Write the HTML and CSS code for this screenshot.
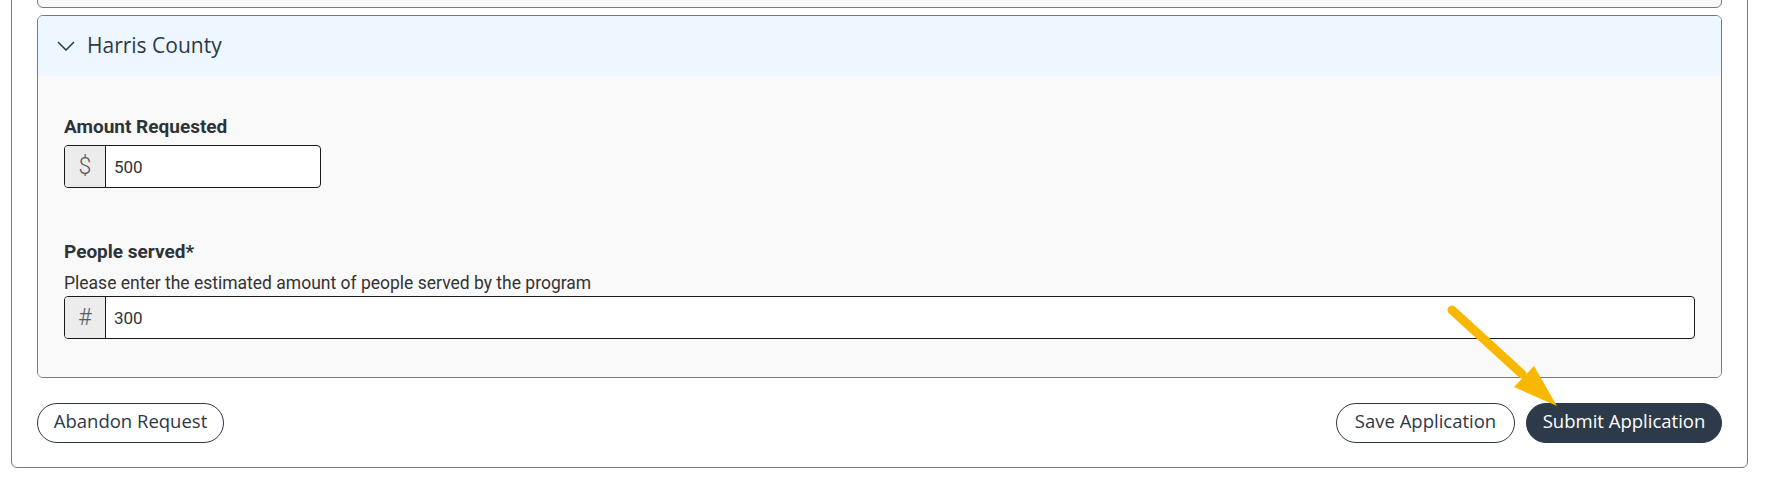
FILE: index.html
```html
<!DOCTYPE html>
<html lang="en">
<head>
<meta charset="utf-8">
<title>Application</title>
<link rel="stylesheet" href="styles.css">
</head>
<body>
<div class="page">
  <div class="card">
    <div class="acc-item acc-prev"></div>
    <div class="acc-item acc-open">
      <div class="acc-header">
        <svg class="chev" width="18" height="10" viewBox="0 0 18 10"><path d="M1 1 L9 9 L17 1" fill="none" stroke="#2d3748" stroke-width="1.5"/></svg>
        <span class="acc-title">Harris County</span>
      </div>
      <div class="acc-body">
        <div class="field field-amount">
          <label class="field-label">Amount Requested</label>
          <div class="input-group input-short">
            <span class="addon">$</span>
            <span class="input-value">500</span>
          </div>
        </div>
        <div class="field field-people">
          <label class="field-label">People served*</label>
          <div class="field-help">Please enter the estimated amount of people served by the program</div>
          <div class="input-group">
            <span class="addon">#</span>
            <span class="input-value">300</span>
          </div>
        </div>
      </div>
    </div>
    <div class="actions">
      <button class="btn btn-outline btn-abandon">Abandon Request</button>
      <div class="actions-right">
        <button class="btn btn-outline btn-save">Save Application</button>
        <button class="btn btn-dark btn-submit">Submit Application</button>
      </div>
    </div>
  </div>
  <svg class="arrow" width="130" height="115" viewBox="0 0 130 115">
    <line x1="12" y1="10" x2="82" y2="74" stroke="#f9b800" stroke-width="9" stroke-linecap="round"/>
    <polygon points="74,87 94,66 117,106" fill="#f9b800"/>
  </svg>
</div>
</body>
</html>
```
FILE: styles.css
```css
html, body {
  margin: 0;
  padding: 0;
  background: #ffffff;
  height: 483px;
  overflow: hidden;
}
.page {
  position: relative;
  width: 1765px;
  height: 483px;
  overflow: hidden;
  font-family: Roboto, "Liberation Sans", sans-serif;
  color: #2d3338;
}
.card {
  margin: -50px 17px 0 11px;
  border: 1px solid #7a7a7a;
  border-radius: 6px;
  padding: 0 25px 24px 25px;
  background: #ffffff;
}
.acc-item {
  border: 1px solid #7a7a7a;
  border-radius: 6px;
  overflow: hidden;
}
.acc-prev {
  height: 55px;
  background: #f9f9f9;
}
.acc-open {
  margin-top: 7px;
}
.acc-header {
  height: 60px;
  background: #eef6ff;
  display: flex;
  align-items: center;
  padding-left: 19px;
  gap: 12px;
}
.chev {
  display: block;
  flex: none;
}
.acc-title {
  font-family: "Open Sans", sans-serif;
  font-size: 21px;
  line-height: 24px;
  color: #2d3748;
  margin-top: -2px;
}
.acc-body {
  background: #f9f9f9;
  padding: 40px 26px 38px 26px;
}
.field-label {
  display: block;
  font-size: 19px;
  line-height: 21px;
  font-weight: 700;
  color: #2d3338;
}
.field-amount .field-label {
  margin-bottom: 8px;
}
.field-people {
  margin-top: 53px;
}
.field-help {
  font-size: 17.5px;
  line-height: 20px;
  margin-top: 11px;
  margin-bottom: 3px;
  color: #333;
}
.input-group {
  display: flex;
  height: 43px;
  box-sizing: border-box;
  border: 1px solid #1a1a1a;
  border-radius: 4px;
  background: #fff;
  overflow: hidden;
}
.input-short {
  width: 257px;
}
.addon {
  width: 40px;
  flex: none;
  background: #ececec;
  border-right: 1px solid #1a1a1a;
  display: flex;
  align-items: center;
  justify-content: center;
  font-size: 23px;
  font-weight: 300;
  color: #555b63;
}
.input-value {
  display: flex;
  align-items: center;
  padding-left: 8px;
  font-size: 17px;
  color: #333;
}
.actions {
  margin-top: 25px;
  display: flex;
  justify-content: space-between;
  align-items: center;
}
.actions-right {
  display: flex;
  gap: 11px;
}
.btn {
  height: 40px;
  box-sizing: border-box;
  border-radius: 20px;
  font-family: "Open Sans", sans-serif;
  font-size: 18.5px;
  line-height: 24px;
  padding: 0 10px 4px 10px;
  cursor: pointer;
}
.btn-outline {
  background: #fff;
  border: 1px solid #2d3748;
  color: #2d3748;
}
.btn-abandon { width: 187px; }
.btn-save { width: 179px; }
.btn-dark {
  background: #2d3a4a;
  border: 1px solid #2d3a4a;
  color: #ffffff;
  font-weight: 500;
  width: 196px;
}
.arrow {
  position: absolute;
  left: 1440px;
  top: 300px;
  pointer-events: none;
}
```
